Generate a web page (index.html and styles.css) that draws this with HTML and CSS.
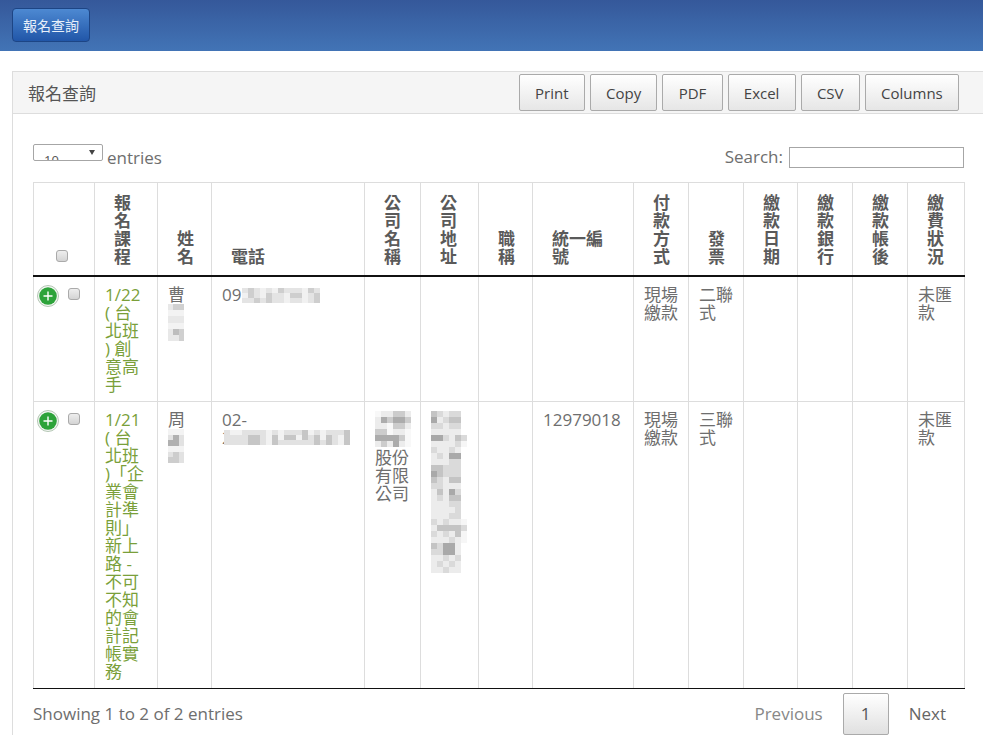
FILE: index.html
```html
<!DOCTYPE html>
<html lang="zh-TW">

<head>
    <meta charset="UTF-8">
    <meta name="viewport" content="width=device-width, initial-scale=1.0">
    <title>報名查詢</title>
    <link rel="stylesheet" href="styles.css">
</head>

<body>
    <div class="topbar">
        <a class="top-btn" href="#">報名查詢</a>
    </div>

    <div class="panel">
        <div class="panel-head">
            <span class="panel-title">報名查詢</span>
            <div class="tools">
                <button class="tool-btn">Print</button>
                <button class="tool-btn">Copy</button>
                <button class="tool-btn">PDF</button>
                <button class="tool-btn">Excel</button>
                <button class="tool-btn">CSV</button>
                <button class="tool-btn">Columns</button>
            </div>
        </div>

        <div class="panel-body">
            <div class="filter-row">
                <div class="length">
                    <div class="fake-select"><span class="fake-value">10</span><span class="fake-arrow"></span></div>
                    <span class="length-text">entries</span>
                </div>
                <label class="search">Search: <input type="text"></label>
            </div>

            <table class="grid">
                <colgroup>
                    <col class="c1">
                    <col class="c2">
                    <col class="c3">
                    <col class="c4">
                    <col class="c5">
                    <col class="c6">
                    <col class="c7">
                    <col class="c8">
                    <col class="c9">
                    <col class="c10">
                    <col class="c11">
                    <col class="c12">
                    <col class="c13">
                    <col class="c14">
                </colgroup>
                <thead>
                    <tr>
                        <th class="check-head"><span class="check"></span></th>
                        <th>報名課程</th>
                        <th>姓名</th>
                        <th class="wide">電話</th>
                        <th>公司名稱</th>
                        <th>公司地址</th>
                        <th>職稱</th>
                        <th class="wide">統一編號</th>
                        <th>付款方式</th>
                        <th>發票</th>
                        <th>繳款日期</th>
                        <th>繳款銀行</th>
                        <th>繳款帳後</th>
                        <th>繳費狀況</th>
                    </tr>
                </thead>
                <tbody>
                    <tr class="row-one">
                        <td class="check-cell">
                            <svg class="plus" width="22" height="22" viewBox="0 0 22 22">
                                <circle cx="11" cy="11" r="10.5" fill="#f4f7f4" stroke="#b4c6b4"/>
                                <circle cx="11" cy="11" r="8.8" fill="#2da33a"/>
                                <path d="M11 6.5v9M6.5 11h9" stroke="#ffffff" stroke-width="1.4"/>
                            </svg><span class="check"></span>
                        </td>
                        <td class="course">1/22<br>( 台<br>北班<br>) 創<br>意高<br>手</td>
                        <td>曹
                            <svg class="blur" width="16" height="37" viewBox="0 0 3 6" preserveAspectRatio="none" shape-rendering="crispEdges">
                                <path fill="#e8e8e8" d="M0 0h3v6H0z"/>
                                <path fill="#d0d0d0" d="M1 0h2v1H1zM1 4h2v1H1zM2 5h1v1H2z"/>
                                <path fill="#f3f3f3" d="M0 1h3v1H0zM0 3h3v1H0z"/>
                                <path fill="#bdbdbd" d="M1 4h1v1H1z"/>
                            </svg>
                        </td>
                        <td>09<svg class="blur-inline" width="78" height="15" viewBox="0 0 13 3" preserveAspectRatio="none" shape-rendering="crispEdges">
                                <path fill="#e4e4e4" d="M0 0h13v3H0z"/>
                                <path fill="#cecece" d="M1 0h1v2H1zM4 1h1v2H4zM6 0h1v1H6zM8 1h2v1H8zM11 0h1v1h-1zM12 1h1v2h-1zM2 2h1v1H2z"/>
                                <path fill="#f1f1f1" d="M0 1h1v1H0zM3 0h1v2H3zM5 0h1v1H5zM7 1h1v2H7zM10 0h1v3h-1z"/>
                            </svg></td>
                        <td></td>
                        <td></td>
                        <td></td>
                        <td></td>
                        <td>現場繳款</td>
                        <td>二聯式</td>
                        <td></td>
                        <td></td>
                        <td></td>
                        <td>未匯款</td>
                    </tr>
                    <tr class="row-two">
                        <td class="check-cell">
                            <svg class="plus" width="22" height="22" viewBox="0 0 22 22">
                                <circle cx="11" cy="11" r="10.5" fill="#f4f7f4" stroke="#b4c6b4"/>
                                <circle cx="11" cy="11" r="8.8" fill="#2da33a"/>
                                <path d="M11 6.5v9M6.5 11h9" stroke="#ffffff" stroke-width="1.4"/>
                            </svg><span class="check"></span>
                        </td>
                        <td class="course">1/21<br>( 台<br>北班<br>)「企<br>業會<br>計準<br>則」<br>新上<br>路 -<br>不可<br>不知<br>的會<br>計記<br>帳實<br>務</td>
                        <td>周
                            <svg class="blur" width="16" height="34" viewBox="0 0 3 6" preserveAspectRatio="none" shape-rendering="crispEdges">
                                <path fill="#e2e2e2" d="M0 0h3v6H0z"/>
                                <path fill="#b0b0b0" d="M1 1h1v1H1zM0 2h2v1H0z"/>
                                <path fill="#f3f3f3" d="M0 0h3v1H0zM0 3h3v1H0z"/>
                                <path fill="#cdcdcd" d="M1 4h1v1H1zM0 5h2v1H0z"/>
                            </svg>
                        </td>
                        <td>02-<br><span class="phone-tail">2<svg class="blur-over" width="126" height="15" viewBox="0 0 21 3" preserveAspectRatio="none" shape-rendering="crispEdges">
                                <path fill="#e2e2e2" d="M0 0h21v3H0z"/>
                                <path fill="#c6c6c6" d="M4 1h2v2H4zM8 1h1v2H8zM10 1h2v1h-2zM13 0h1v2h-1zM15 1h1v2h-1zM17 1h1v2h-1zM20 0h1v3h-1z"/>
                                <path fill="#f2f2f2" d="M1 0h2v1H1zM7 0h1v3H7zM9 0h1v2H9zM12 1h1v1h-1zM14 0h1v1h-1zM16 0h1v2h-1zM19 1h1v2h-1z"/>
                            </svg></span></td>
                        <td>
                            <svg class="blur blur-company" width="36" height="36" viewBox="0 0 6 6" shape-rendering="crispEdges">
                                <path fill="#ececec" d="M0 0h6v6H0z"/>
                                <path fill="#cccccc" d="M3 0h2v1H3zM2 1h1v1H2zM5 1h1v1H5zM3 2h2v1H3zM0 3h2v1H0zM4 4h1v1H4zM1 5h1v1H1z"/>
                                <path fill="#acacac" d="M1 1h1v1H1zM3 1h2v1H3zM0 4h3v1H0zM3 4h1v2H3z"/>
                                <path fill="#f8f8f8" d="M0 0h1v1H0zM2 2h1v2H2zM5 3h1v3H5z"/>
                            </svg>股份有限公司
                        </td>
                        <td>
                            <svg class="blur" width="36" height="162" viewBox="0 0 6 27" shape-rendering="crispEdges">
                                <path fill="#ececec" d="M0 0h5v27H0z"/>
                                <path fill="#f6f6f6" d="M5 4h1v2H5zM5 18h1v4H5z"/>
                                <path fill="#dadada" d="M1 0h1v1H1zM3 0h2v1H3zM2 1h1v1H2zM0 2h2v1H0zM3 2h2v1H3zM5 4h1v1H5zM2 4h1v1H2zM4 5h1v1H4zM0 6h1v1H0zM3 6h1v1H3zM1 7h1v1H1zM3 8h2v1H3zM2 9h3v1H2zM2 10h3v1H2zM1 11h1v1H1zM0 12h2v1H0zM4 13h1v1H4zM1 14h1v1H1zM3 15h2v1H3zM4 16h1v1H4zM3 17h2v1H3zM0 18h1v1H0zM2 18h1v1H2zM5 19h1v1H5zM0 20h1v1H0zM2 20h1v1H2zM3 21h1v1H3zM1 22h1v1H1zM0 23h2v1H0zM2 24h1v1H2zM4 24h1v1H4zM1 25h1v1H1zM3 25h1v1H3zM2 26h1v1H2z"/>
                                <path fill="#c4c4c4" d="M0 0h1v1H0zM3 1h2v1H3zM4 4h1v1H4zM0 9h2v1H0zM1 10h1v1H1zM0 11h1v1H0zM3 11h2v1H3zM1 13h1v1H1zM3 14h2v1H3zM1 19h4v1H1zM4 20h1v1H4zM0 22h1v1H0z"/>
                                <path fill="#a9a9a9" d="M0 1h1v1H0zM0 4h2v1H0zM3 7h2v1H3zM0 10h1v1H0zM3 13h1v1H3zM2 22h2v2H2z"/>
                            </svg>
                        </td>
                        <td></td>
                        <td>12979018</td>
                        <td>現場繳款</td>
                        <td>三聯式</td>
                        <td></td>
                        <td></td>
                        <td></td>
                        <td>未匯款</td>
                    </tr>
                </tbody>
            </table>

            <div class="table-foot">
                <span class="info">Showing 1 to 2 of 2 entries</span>
                <div class="pager">
                    <a class="page-link muted" href="#">Previous</a>
                    <a class="page-current" href="#">1</a>
                    <a class="page-link" href="#">Next</a>
                </div>
            </div>
        </div>
    </div>
</body>

</html>
```

FILE: styles.css
```css
* {
    box-sizing: border-box;
}

html,
body {
    height: 741px;
    overflow: hidden;
}

body {
    margin: 0;
    background-color: #ffffff;
    color: #6e6e6e;
    font-family: "Open Sans", "Noto Sans CJK TC", sans-serif;
    font-size: 17px;
}

a {
    text-decoration: none;
}

.topbar {
    height: 51px;
    padding: 8px 12px;
    background: linear-gradient(#35589a, #4274b6);
}

.top-btn {
    display: flex;
    align-items: center;
    justify-content: center;
    width: 78px;
    height: 34px;
    color: #e8f0fa;
    font-size: 14px;
    background: linear-gradient(#4d89d2, #2156a8);
    border: 1px solid #1d4585;
    border-radius: 4px;
}

.panel {
    margin: 20px 0 0 12px;
    border-top: 1px solid #dddddd;
    border-left: 1px solid #dddddd;
}

.panel-head {
    display: flex;
    align-items: center;
    justify-content: space-between;
    height: 42px;
    padding: 0 24px 0 15px;
    background-color: #f5f5f5;
    border-bottom: 1px solid #dddddd;
}

.panel-title {
    color: #555555;
}

.tools {
    display: flex;
    gap: 5px;
}

.tool-btn {
    height: 37px;
    padding: 0 15.25px;
    color: #444444;
    font-family: "Open Sans", sans-serif;
    font-size: 15px;
    background: linear-gradient(#ffffff, #e6e6e6);
    border: 1px solid #aaaaaa;
    border-radius: 2px;
}

.panel-body {
    padding: 0 19px 0 20px;
}

.filter-row {
    display: flex;
    align-items: flex-start;
    justify-content: space-between;
    height: 68px;
    padding-top: 30px;
}

.length {
    display: flex;
    align-items: flex-start;
    gap: 4px;
}

.length-text {
    line-height: 28px;
}

.fake-select {
    position: relative;
    width: 70px;
    height: 17px;
    overflow: hidden;
    background-color: #ffffff;
    border: 1px solid #a6a6a6;
    border-radius: 2px;
}

.fake-value {
    position: absolute;
    top: 6px;
    left: 10px;
    color: #555555;
    font-size: 13px;
    line-height: 18px;
}

.fake-arrow {
    position: absolute;
    top: 5px;
    right: 7px;
    border-top: 5px solid #444444;
    border-left: 3px solid transparent;
    border-right: 3px solid transparent;
}

.search {
    display: flex;
    align-items: center;
    gap: 6px;
    height: 22px;
    margin-top: 1px;
}

.search input {
    width: 175px;
    height: 21px;
    margin-top: 3px;
    border: 1px solid #a6a6a6;
}

.grid {
    width: 931px;
    table-layout: fixed;
    border-collapse: collapse;
    line-height: 18px;
}

.c1 { width: 61px; }
.c2 { width: 63px; }
.c3 { width: 54px; }
.c4 { width: 153px; }
.c5 { width: 56px; }
.c6 { width: 58px; }
.c7 { width: 54px; }
.c8 { width: 101px; }
.c9 { width: 55px; }
.c10 { width: 55px; }
.c11 { width: 54px; }
.c12 { width: 55px; }
.c13 { width: 55px; }
.c14 { width: 57px; }

.grid th,
.grid td {
    border: 1px solid #dddddd;
    word-break: break-all;
}

.grid th {
    height: 93px;
    padding: 10px 15px 9px 19px;
    color: #5a5a5a;
    font-size: 17px;
    font-weight: 700;
    text-align: left;
    vertical-align: bottom;
    border-bottom: 2px solid #111111;
}

.grid td {
    padding: 9px 8px 7px 10px;
    vertical-align: top;
}

.row-one td {
    height: 125px;
}

.row-two td {
    height: 287px;
    border-bottom: 1px solid #111111;
}

.grid .course {
    color: #7a9f3a;
    white-space: nowrap;
}

.grid .check-head {
    padding: 0 4px 10px 0;
    text-align: center;
}

.check {
    display: inline-block;
    width: 12px;
    height: 12px;
    background: linear-gradient(#eeeeee, #d4d4d4);
    border: 1px solid #aaaaaa;
    border-radius: 3px;
}

.grid .check-cell {
    padding: 8px 0 0 3px;
    white-space: nowrap;
    line-height: 0;
}

.plus {
    margin-right: 9px;
    vertical-align: top;
}

.check-cell .check {
    vertical-align: top;
    margin-top: 3px;
}

.blur {
    display: block;
}

.blur-company {
    margin-bottom: 2px;
}

.blur-inline {
    vertical-align: top;
    margin: 2px 0 0 1px;
}

.phone-tail {
    position: relative;
    display: block;
}

.blur-over {
    position: absolute;
    top: 1px;
    left: 2px;
}

.table-foot {
    display: flex;
    align-items: flex-start;
    justify-content: space-between;
    padding-top: 4px;
}

.info {
    margin-top: 10px;
    line-height: 22px;
}

.pager {
    display: flex;
    align-items: center;
    height: 42px;
    padding-right: 18px;
    gap: 20px;
}

.page-link {
    color: #666666;
}

.page-link.muted {
    color: #888888;
}

.page-current {
    display: flex;
    align-items: center;
    justify-content: center;
    width: 46px;
    height: 42px;
    color: #555555;
    background: linear-gradient(#ffffff, #e0e0e0);
    border: 1px solid #aaaaaa;
    border-radius: 2px;
}
```
